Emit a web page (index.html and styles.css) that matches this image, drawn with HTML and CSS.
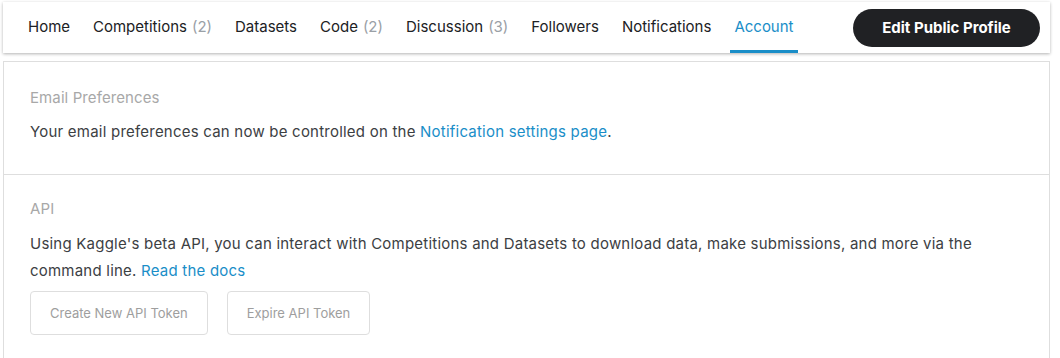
FILE: index.html
```html
<!DOCTYPE html>
<html lang="en">
<head>
    <meta charset="UTF-8">
    <meta name="viewport" content="width=device-width, initial-scale=1.0">
    <link rel="stylesheet" href="styles.css">
    <title>Account</title>
</head>
<body>
    <div class="page">
        <div class="tabs-bar">
            <nav class="tabs">
                <a class="tab">Home</a>
                <a class="tab">Competitions <span class="count">(2)</span></a>
                <a class="tab">Datasets</a>
                <a class="tab">Code <span class="count">(2)</span></a>
                <a class="tab">Discussion <span class="count">(3)</span></a>
                <a class="tab">Followers</a>
                <a class="tab">Notifications</a>
                <a class="tab active">Account</a>
            </nav>
            <button class="edit-btn">Edit Public Profile</button>
        </div>

        <div class="card">
            <div class="section">
                <div class="section-title">Email Preferences</div>
                <p>Your email preferences can now be controlled on the <a class="link">Notification settings page</a>.</p>
            </div>

            <div class="section">
                <div class="section-title">API</div>
                <p>Using Kaggle's beta API, you can interact with Competitions and Datasets to download data, make submissions, and more via the command line. <a class="link">Read the docs</a></p>
                <div class="actions">
                    <button class="token-btn">Create New API Token</button>
                    <button class="token-btn">Expire API Token</button>
                </div>
            </div>
        </div>
    </div>
</body>
</html>
```

FILE: styles.css
```css
body {
    margin: 0;
    font-family: Inter, "Noto Sans", sans-serif;
    background-color: #fff;
    color: #3c4043;
}

.page {
    padding: 2px 10px 0 3px;
}

.tabs-bar {
    display: flex;
    align-items: center;
    justify-content: space-between;
    height: 51px;
    padding: 0 10px 0 21px;
    background-color: #fff;
    box-shadow: 0 1px 3px rgba(0, 0, 0, 0.3);
    position: relative;
    z-index: 1;
}

.tabs {
    display: flex;
    gap: 15px;
    height: 100%;
}

.tab {
    display: flex;
    align-items: center;
    padding: 1px 4px 0;
    border-bottom: 3px solid transparent;
    font-size: 15px;
    color: #202124;
    box-sizing: border-box;
}

.tab .count {
    color: #9aa0a6;
    margin-left: 5px;
}

.tab.active {
    color: #1a8ec8;
    border-bottom-color: #1a8ec8;
}

.edit-btn {
    height: 38px;
    width: 187px;
    border: none;
    border-radius: 19px;
    background-color: #202124;
    color: #fff;
    font-family: Inter, sans-serif;
    font-weight: 700;
    font-size: 15px;
    cursor: pointer;
}

.card {
    margin-top: 8px;
    border: 1px solid #dedede;
    border-bottom: none;
}

.section {
    padding: 24px 26px 29px;
}

.section + .section {
    border-top: 1px solid #dedede;
    padding-top: 22px;
}

.section-title {
    font-size: 15px;
    line-height: 24px;
    letter-spacing: 0.1px;
    color: #a8a8a8;
    margin-bottom: 8px;
}

.section + .section .section-title {
    margin-bottom: 9px;
}

p {
    margin: 0;
    font-size: 15px;
    line-height: 27px;
    letter-spacing: 0.22px;
}

.link {
    color: #1a8ec8;
}

.actions {
    display: flex;
    gap: 19px;
    margin-top: 7px;
}

.token-btn {
    height: 44px;
    padding: 0 19px;
    background-color: #fff;
    border: 1px solid #dedede;
    border-radius: 4px;
    font-family: Inter, sans-serif;
    font-size: 13px;
    color: #9e9e9e;
}
```
